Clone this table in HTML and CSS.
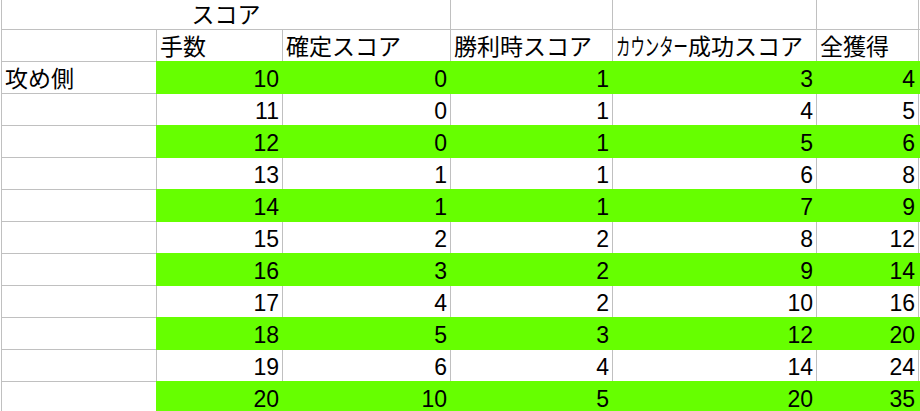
FILE: index.html
```html
<!DOCTYPE html>
<html lang="ja">
<head>
<meta charset="utf-8">
<title>スコア</title>
<link rel="stylesheet" href="styles.css">
</head>
<body>
<div class="sheet">
  <div class="c merged center">スコア</div><div class="c"></div><div class="c"></div><div class="c"></div><div class="c"></div>

  <div class="c"></div><div class="c">手数</div><div class="c">確定スコア</div><div class="c">勝利時スコア</div><div class="c"><span class="narrow"><span class="narrow-in">カウンター</span></span>成功スコア</div><div class="c">全獲得</div><div class="c"></div>

  <div class="c">攻め側</div><div class="c g n">10</div><div class="c g n">0</div><div class="c g n">1</div><div class="c g n">3</div><div class="c g n">4</div><div class="c g"></div>
  <div class="c"></div><div class="c n">11</div><div class="c n">0</div><div class="c n">1</div><div class="c n">4</div><div class="c n">5</div><div class="c"></div>
  <div class="c"></div><div class="c g n">12</div><div class="c g n">0</div><div class="c g n">1</div><div class="c g n">5</div><div class="c g n">6</div><div class="c g"></div>
  <div class="c"></div><div class="c n">13</div><div class="c n">1</div><div class="c n">1</div><div class="c n">6</div><div class="c n">8</div><div class="c"></div>
  <div class="c"></div><div class="c g n">14</div><div class="c g n">1</div><div class="c g n">1</div><div class="c g n">7</div><div class="c g n">9</div><div class="c g"></div>
  <div class="c"></div><div class="c n">15</div><div class="c n">2</div><div class="c n">2</div><div class="c n">8</div><div class="c n">12</div><div class="c"></div>
  <div class="c"></div><div class="c g n">16</div><div class="c g n">3</div><div class="c g n">2</div><div class="c g n">9</div><div class="c g n">14</div><div class="c g"></div>
  <div class="c"></div><div class="c n">17</div><div class="c n">4</div><div class="c n">2</div><div class="c n">10</div><div class="c n">16</div><div class="c"></div>
  <div class="c"></div><div class="c g n">18</div><div class="c g n">5</div><div class="c g n">3</div><div class="c g n">12</div><div class="c g n">20</div><div class="c g"></div>
  <div class="c"></div><div class="c n">19</div><div class="c n">6</div><div class="c n">4</div><div class="c n">14</div><div class="c n">24</div><div class="c"></div>
  <div class="c"></div><div class="c g n">20</div><div class="c g n">10</div><div class="c g n">5</div><div class="c g n">20</div><div class="c g n">35</div><div class="c g"></div>
</div>
</body>
</html>
```

FILE: styles.css
```css
html, body {
  margin: 0;
  padding: 0;
  background: #ffffff;
  overflow: hidden;
}

.sheet {
  margin-left: 1px;
  border-left: 1px solid #c0c0c0;
  display: grid;
  grid-template-columns: 155px 126px 168px 162px 204px 102px 1fr;
  grid-template-rows: 30px;
  grid-auto-rows: 32px;
  font-family: "Liberation Sans", "Noto Sans CJK JP", sans-serif;
  font-size: 23px;
  color: #000000;
}

.c {
  box-sizing: border-box;
  background: #ffffff;
  border-right: 1px solid #c0c0c0;
  border-bottom: 1px solid #c0c0c0;
  display: flex;
  align-items: flex-end;
  padding: 0 3px 2px 3px;
  line-height: 23px;
  white-space: nowrap;
  overflow: visible;
}

.merged {
  grid-column: span 3;
}

.center {
  justify-content: center;
}

.n {
  justify-content: flex-end;
}

.g {
  background: #66ff00;
  border-color: #66ff00;
  box-shadow: 0 0 0 1px #66ff00;
}

.narrow {
  display: inline-block;
  width: 72px;
  overflow: visible;
}

.narrow-in {
  display: inline-block;
  transform: scaleX(0.626);
  transform-origin: left bottom;
}
```
